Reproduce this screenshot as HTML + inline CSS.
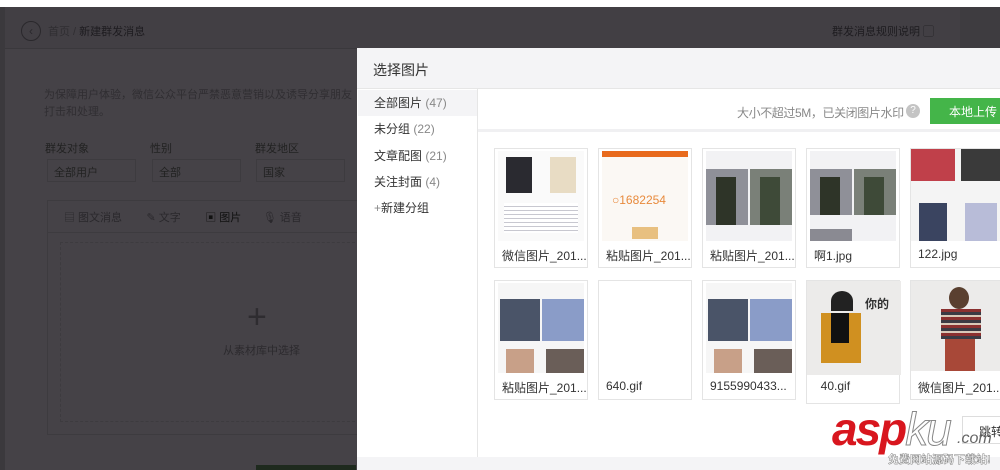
<!DOCTYPE html>
<html><head><meta charset="utf-8"><style>
*{margin:0;padding:0;box-sizing:border-box}
body{width:1000px;height:470px;overflow:hidden;background:#454247;font-family:"Liberation Sans","Noto Sans CJK SC",sans-serif;position:relative;font-size:12px}
.a{position:absolute;white-space:nowrap}
.card{position:absolute;width:94px;height:120px;border:1px solid #e4e4e4;background:#fff}
.card .im{position:absolute;left:3px;top:2px;width:86px;height:90px;overflow:hidden;background:#f4f4f4}
.card .lb{position:absolute;left:7px;top:98px;font-size:12px;color:#333;white-space:nowrap}
</style></head><body>
<div class="a" style="left:0;top:0;width:1000px;height:7px;background:#fff"></div>
<div class="a" style="left:0;top:7px;width:5px;height:463px;background:#3b393d"></div>
<div class="a" style="left:5px;top:7px;width:955px;height:42px;background:#423f44;border-bottom:1px solid #3a383c"></div>
<div class="a" style="left:960px;top:7px;width:40px;height:42px;background:#3e3c40"></div>
<div class="a" style="left:21px;top:21px;width:20px;height:20px;border:1px solid #2a282c;border-radius:50%;color:#2a282c;font-size:12px;line-height:18px;text-align:center">‹</div>
<div class="a" style="left:48px;top:23px;font-size:11px;color:#302e32">首页 / <span style="color:#1e1c20">新建群发消息</span></div>
<div class="a" style="left:832px;top:23px;font-size:11px;color:#1e1c20">群发消息规则说明 ▢</div>
<div class="a" style="left:44px;top:87px;font-size:11px;line-height:17px;color:#302e32">为保障用户体验，微信公众平台严禁恶意营销以及诱导分享朋友<br>打击和处理。</div>
<div class="a" style="left:45px;top:140px;font-size:11px;color:#222">群发对象</div>
<div class="a" style="left:150px;top:140px;font-size:11px;color:#222">性别</div>
<div class="a" style="left:255px;top:140px;font-size:11px;color:#222">群发地区</div>
<div class="a" style="left:47px;top:159px;width:89px;height:23px;border:1px solid #3d3b3f;color:#222;font-size:11px;padding:4px 6px">全部用户</div>
<div class="a" style="left:152px;top:159px;width:89px;height:23px;border:1px solid #3d3b3f;color:#222;font-size:11px;padding:4px 6px">全部</div>
<div class="a" style="left:256px;top:159px;width:89px;height:23px;border:1px solid #3d3b3f;color:#222;font-size:11px;padding:4px 6px">国家</div>
<div class="a" style="left:47px;top:200px;width:320px;height:235px;border:1px solid #3d3b3f"></div>
<div class="a" style="left:47px;top:232px;width:320px;height:1px;background:#3d3b3f"></div>
<div class="a" style="left:64px;top:209px;font-size:11px;color:#2a282c">▤ 图文消息 &nbsp;&nbsp;&nbsp;&nbsp;&nbsp;&nbsp;&nbsp;✎ 文字 &nbsp;&nbsp;&nbsp;&nbsp;&nbsp;&nbsp;&nbsp;<span style="color:#111">▣ 图片</span> &nbsp;&nbsp;&nbsp;&nbsp;&nbsp;&nbsp;🎙 语音</div>
<div class="a" style="left:60px;top:242px;width:300px;height:180px;border:1px dashed #3d3b3f"></div>
<div class="a" style="left:247px;top:300px;font-size:34px;line-height:34px;color:#2e2c30;font-weight:300">+</div>
<div class="a" style="left:223px;top:342px;font-size:11px;color:#2c2a2e">从素材库中选择</div>
<div class="a" style="left:256px;top:465px;width:100px;height:5px;background:#1e2a1e"></div>
<!-- modal -->
<div class="a" style="left:357px;top:48px;width:643px;height:422px;background:#fff"></div>
<div class="a" style="left:357px;top:48px;width:643px;height:41px;background:#f4f4f6;border-bottom:1px solid #e6e6e6"></div>
<div class="a" style="left:373px;top:60px;font-size:14px;color:#333">选择图片</div>
<div class="a" style="left:477px;top:89px;width:1px;height:368px;background:#e6e6e6"></div>
<div class="a" style="left:358px;top:90px;width:119px;height:26px;background:#f4f4f6"></div>
<div class="a" style="left:374px;top:90px;font-size:12px;line-height:26.3px;color:#333">全部图片 <span style="color:#888">(47)</span><br>未分组 <span style="color:#888">(22)</span><br>文章配图 <span style="color:#888">(21)</span><br>关注封面 <span style="color:#888">(4)</span><br><span style="color:#888">+</span>新建分组</div>
<div class="a" style="left:478px;top:129px;width:522px;height:3px;background:#f0f0f2"></div>
<div class="a" style="left:737px;top:104px;font-size:12px;color:#888;letter-spacing:-0.4px">大小不超过5M，已关闭图片水印</div>
<div class="a" style="left:906px;top:104px;width:14px;height:14px;border-radius:50%;background:#c4c4c4;color:#fff;font-size:10px;text-align:center;line-height:14px">?</div>
<div class="a" style="left:930px;top:98px;width:72px;height:26px;background:#44b549;color:#fff;font-size:12px;padding:5px 0 0 19px">本地上传</div>
<div class="a" style="left:357px;top:457px;width:643px;height:13px;background:#f4f4f6"></div>
<!-- row 1 -->
<div class="card" style="left:494px;top:148px"><div class="im" style="background:#fafafa"><div class="a" style="left:8px;top:6px;width:26px;height:36px;background:#2a2a30"></div><div class="a" style="left:52px;top:6px;width:26px;height:36px;background:#e8dcc4"></div><div class="a" style="left:6px;top:52px;width:74px;height:30px;background:repeating-linear-gradient(#fff 0 3px,#c8c8d0 3px 4px)"></div></div><div class="lb">微信图片_201...</div></div>
<div class="card" style="left:598px;top:148px"><div class="im" style="background:#fbf8f4"><div class="a" style="left:0;top:0;width:86px;height:6px;background:#e86a1c"></div><div class="a" style="left:10px;top:42px;font-size:12px;color:#e88a3c">○1682254</div><div class="a" style="left:30px;top:76px;width:26px;height:12px;background:#e8c080"></div></div><div class="lb">粘贴图片_201...</div></div>
<div class="card" style="left:702px;top:148px"><div class="im" style="background:#f2f2f4"><div class="a" style="left:0;top:18px;width:42px;height:56px;background:#8f9098"></div><div class="a" style="left:44px;top:18px;width:42px;height:56px;background:#7a8078"></div><div class="a" style="left:10px;top:26px;width:20px;height:48px;background:#2e3428"></div><div class="a" style="left:54px;top:26px;width:20px;height:48px;background:#3e4a38"></div></div><div class="lb">粘贴图片_201...</div></div>
<div class="card" style="left:806px;top:148px"><div class="im" style="background:#f2f2f4"><div class="a" style="left:0;top:18px;width:42px;height:46px;background:#8f9098"></div><div class="a" style="left:44px;top:18px;width:42px;height:46px;background:#7a8078"></div><div class="a" style="left:10px;top:26px;width:20px;height:38px;background:#2e3428"></div><div class="a" style="left:54px;top:26px;width:20px;height:38px;background:#3e4a38"></div><div class="a" style="left:0;top:78px;width:42px;height:12px;background:#8a8a92"></div></div><div class="lb">啊1.jpg</div></div>
<div class="card" style="left:910px;top:148px;width:100px"><div class="im" style="width:92px;left:0;top:0;height:92px"><div class="a" style="left:0;top:0;width:44px;height:32px;background:#c0404a"></div><div class="a" style="left:50px;top:0;width:40px;height:32px;background:#3a3a3a"></div><div class="a" style="left:8px;top:54px;width:28px;height:38px;background:#3a4460"></div><div class="a" style="left:54px;top:54px;width:32px;height:38px;background:#b8bcd8"></div></div><div class="lb">122.jpg</div></div>
<!-- row 2 -->
<div class="card" style="left:494px;top:280px"><div class="im" style="background:#f6f6f6"><div class="a" style="left:2px;top:16px;width:40px;height:42px;background:#4a5468"></div><div class="a" style="left:44px;top:16px;width:42px;height:42px;background:#8a9cc8"></div><div class="a" style="left:8px;top:66px;width:28px;height:24px;background:#c8a088"></div><div class="a" style="left:48px;top:66px;width:38px;height:24px;background:#6a5e58"></div></div><div class="lb">粘贴图片_201...</div></div>
<div class="card" style="left:598px;top:280px"><div class="im" style="background:#fff"></div><div class="lb">640.gif</div></div>
<div class="card" style="left:702px;top:280px"><div class="im" style="background:#f6f6f6"><div class="a" style="left:2px;top:16px;width:40px;height:42px;background:#4a5468"></div><div class="a" style="left:44px;top:16px;width:42px;height:42px;background:#8a9cc8"></div><div class="a" style="left:8px;top:66px;width:28px;height:24px;background:#c8a088"></div><div class="a" style="left:48px;top:66px;width:38px;height:24px;background:#6a5e58"></div></div><div class="lb">9155990433...</div></div>
<div class="card" style="left:806px;top:280px;height:124px;width:94px"><div class="im" style="left:0;top:0;width:94px;height:94px;background:#ecebea"><div class="a" style="left:24px;top:10px;width:22px;height:20px;background:#222;border-radius:50% 50% 0 0"></div><div class="a" style="left:14px;top:32px;width:40px;height:50px;background:#d09020"></div><div class="a" style="left:24px;top:32px;width:18px;height:30px;background:#111"></div><div class="a" style="left:58px;top:14px;font-size:12px;color:#333;font-weight:bold">你的</div></div><div class="lb">&nbsp;&nbsp;40.gif</div></div>
<div class="card" style="left:910px;top:280px;width:100px"><div class="im" style="left:0;top:0;width:100px;background:#ecebea"><div class="a" style="left:38px;top:6px;width:20px;height:22px;background:#5a4030;border-radius:50%"></div><div class="a" style="left:30px;top:28px;width:40px;height:30px;background:repeating-linear-gradient(#8a3030 0 3px,#3a3a44 3px 6px,#d8c8b8 6px 8px)"></div><div class="a" style="left:34px;top:58px;width:30px;height:34px;background:#a84838"></div></div><div class="lb">微信图片_201...</div></div>
<div class="a" style="left:962px;top:416px;width:40px;height:28px;border:1px solid #ddd;background:#fff;font-size:12px;padding:6px 0 0 16px;color:#333">跳转</div>
<!-- watermark -->
<div class="a" style="left:832px;top:405px;font-size:46px;font-weight:bold;font-style:italic;color:#d8161e;letter-spacing:-2px;line-height:48px">asp<span style="color:#fff;-webkit-text-stroke:1px #888;font-weight:300">ku</span></div>
<div class="a" style="left:957px;top:430px;font-size:16px;font-style:italic;color:#666">.com</div>
<div class="a" style="left:888px;top:451px;font-size:11px;color:#fff;font-weight:bold;-webkit-text-stroke:0.5px #888">免费网站源码下载站!</div>
</body></html>
